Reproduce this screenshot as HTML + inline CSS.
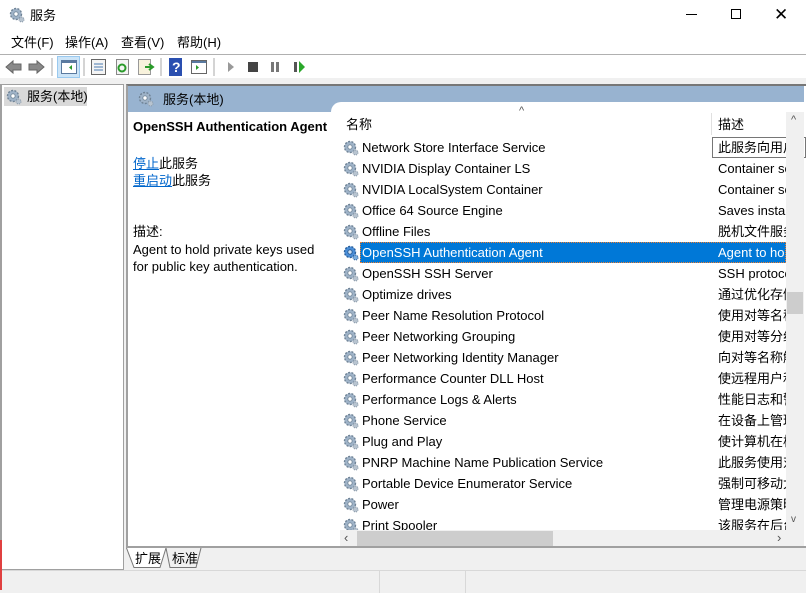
<!DOCTYPE html>
<html><head><meta charset="utf-8"><style>
*{margin:0;padding:0;box-sizing:border-box}
body{width:806px;height:593px;overflow:hidden;background:#fff;font-family:"Liberation Sans","Noto Sans CJK SC",sans-serif;font-size:13px;line-height:15px;color:#000;position:relative}
.a{position:absolute;white-space:nowrap}
.g{position:absolute;width:16px;height:16px}
</style></head><body>
<svg width="0" height="0" style="position:absolute"><defs>
<g id="gear"><circle cx="7" cy="7" r="5.5" fill="#9fb3c8" stroke="#6f8396" stroke-width="1.4" stroke-dasharray="2 1.4"/><circle cx="7" cy="7" r="2.2" fill="#fff" stroke="#7a8ea0"/><circle cx="12.5" cy="12.5" r="2.5" fill="#b8c4d0" stroke="#8898a8" stroke-dasharray="1.2 1"/></g>
<g id="gearS"><circle cx="7" cy="7" r="5.5" fill="#4a8ed8" stroke="#2a5f9a" stroke-width="1.4" stroke-dasharray="2 1.4"/><circle cx="7" cy="7" r="2.2" fill="#cfe2f5" stroke="#2a5f9a"/><circle cx="12.5" cy="12.5" r="2.5" fill="#7aaee0" stroke="#2a5f9a" stroke-dasharray="1.2 1"/></g>
</defs></svg>
<!-- title -->
<svg class="g" style="left:9px;top:7px"><use href="#gear"/></svg>
<div class="a" style="left:30px;top:8px">服务</div>
<div class="a" style="left:686px;top:14px;width:11px;height:1px;background:#000"></div>
<div class="a" style="left:731px;top:9px;width:10px;height:10px;border:1px solid #000"></div>
<div class="a" style="left:774px;top:6px;font-size:17px;line-height:17px">✕</div>
<!-- menu -->
<div class="a" style="left:11px;top:35px">文件(F)</div>
<div class="a" style="left:65px;top:35px">操作(A)</div>
<div class="a" style="left:121px;top:35px">查看(V)</div>
<div class="a" style="left:177px;top:35px">帮助(H)</div>
<div class="a" style="left:0;top:54px;width:806px;height:1px;background:#b0b0b0"></div>
<!-- toolbar -->
<svg class="a" style="left:0;top:55px" width="320" height="24">
<path d="M6 12 L13 6 V9 H21 V15 H13 V18 Z" fill="#8a8a8a" stroke="#666"/>
<path d="M44 12 L37 6 V9 H29 V15 H37 V18 Z" fill="#8a8a8a" stroke="#666"/>
<line x1="52" y1="3" x2="52" y2="21" stroke="#aaa"/>
<rect x="57.5" y="1.5" width="22" height="21" fill="#cce4f7" stroke="#99c9ef"/>
<rect x="61.5" y="5.5" width="15" height="13" fill="#fff" stroke="#5a7aa0"/><rect x="62" y="6" width="14" height="2" fill="#5a7aa0"/><path d="M72 10 L69 12.5 L72 15Z" fill="#2a9a2a"/>
<line x1="84" y1="3" x2="84" y2="21" stroke="#aaa"/>
<rect x="91.5" y="4.5" width="14" height="15" fill="#f4f4f4" stroke="#666"/><path d="M94 9H103M94 12H103M94 15H103" stroke="#4a7ab0"/>
<rect x="116.5" y="4.5" width="12" height="15" fill="#f4f4f4" stroke="#888"/><circle cx="122" cy="13" r="3.5" fill="none" stroke="#2a9a2a" stroke-width="2"/>
<rect x="138.5" y="4.5" width="12" height="15" fill="#f8f2dc" stroke="#999"/><path d="M145 12H152M149 9L153 12L149 15" stroke="#2a9a2a" stroke-width="2" fill="none"/>
<line x1="161" y1="3" x2="161" y2="21" stroke="#aaa"/>
<rect x="169" y="3" width="13" height="18" fill="#2a4fb0"/><text x="172" y="17" fill="#fff" font-size="14" font-weight="bold" font-family="Liberation Sans">?</text>
<rect x="191.5" y="5.5" width="15" height="13" fill="#fff" stroke="#666"/><rect x="192" y="6" width="14" height="2" fill="#5a7aa0"/><path d="M196 10 L199 12.5 L196 15Z" fill="#2a9a2a"/>
<line x1="214" y1="3" x2="214" y2="21" stroke="#aaa"/>
<path d="M228 7 L234 12 L228 17Z" fill="#999"/>
<rect x="248" y="7" width="10" height="10" fill="#444"/>
<rect x="271" y="7" width="3" height="10" fill="#777"/><rect x="276" y="7" width="3" height="10" fill="#777"/>
<rect x="294" y="7" width="3" height="10" fill="#555"/><path d="M299 6 L305 12 L299 18Z" fill="#2aa82a"/>
</svg>
<div class="a" style="left:0;top:78px;width:806px;height:6px;background:#f0f0f0"></div>
<!-- left pane -->
<div class="a" style="left:0;top:84px;width:124px;height:486px;border:1px solid #a0a0a0;border-left-width:2px"></div>
<div class="a" style="left:4px;top:87px;width:83px;height:19px;background:#d9d9d9"></div>
<svg class="g" style="left:6px;top:89px"><use href="#gear"/></svg>
<div class="a" style="left:27px;top:89px">服务(本地)</div>
<!-- right panel -->
<div class="a" style="left:124px;top:84px;width:682px;height:486px;background:#f0f0f0"></div>
<div class="a" style="left:126px;top:84px;width:680px;height:464px;border-top:2px solid #777;border-left:2px solid #a0a0a0;background:#fff"></div>
<div class="a" style="left:128px;top:86px;width:676px;height:26px;background:#98b3d0"></div>
<div class="a" style="left:331px;top:102px;width:473px;height:12px;background:#fff;border-top-left-radius:10px"></div>
<svg class="g" style="left:138px;top:91px"><use href="#gear"/></svg>
<div class="a" style="left:163px;top:92px">服务(本地)</div>
<div class="a" style="left:133px;top:119px;font-weight:bold">OpenSSH Authentication Agent</div>
<div class="a" style="left:133px;top:156px"><span style="color:#0066cc;text-decoration:underline">停止</span>此服务</div>
<div class="a" style="left:133px;top:173px"><span style="color:#0066cc;text-decoration:underline">重启动</span>此服务</div>
<div class="a" style="left:133px;top:224px">描述:</div>
<div class="a" style="left:133px;top:241px;line-height:17px">Agent to hold private keys used<br>for public key authentication.</div>
<!-- list header -->
<div class="a" style="left:346px;top:117px">名称</div>
<div class="a" style="left:519px;top:104px;font-size:11px;color:#555">^</div>
<div class="a" style="left:711px;top:113px;width:1px;height:22px;background:#e0e0e0"></div>
<div class="a" style="left:718px;top:117px">描述</div>
<div class="a" style="left:360px;top:242px;width:426px;height:21px;background:#0078d7;outline:1px dotted #f08030;outline-offset:-1px"></div>
<div class="a" style="left:712px;top:137px;width:94px;height:21px;border:1px solid #767676;background:#fff;z-index:1"></div>
<script>
var n=["Network Store Interface Service","NVIDIA Display Container LS","NVIDIA LocalSystem Container","Office 64 Source Engine","Offline Files","OpenSSH Authentication Agent","OpenSSH SSH Server","Optimize drives","Peer Name Resolution Protocol","Peer Networking Grouping","Peer Networking Identity Manager","Performance Counter DLL Host","Performance Logs & Alerts","Phone Service","Plug and Play","PNRP Machine Name Publication Service","Portable Device Enumerator Service","Power","Print Spooler"];
var d=["此服务向用户模式","Container se","Container se","Saves instal","脱机文件服务","Agent to ho","SSH protoco","通过优化存储","使用对等名称","使用对等分组","向对等名称解","使远程用户和","性能日志和警","在设备上管理","使计算机在极","此服务使用对","强制可移动大","管理电源策略","该服务在后台"];
var h="";
for(var i=0;i<n.length;i++){var y=137+21*i;var s=i==5;
h+='<svg class="g" style="left:343px;top:'+(y+3)+'px;z-index:2"><use href="#'+(s?'gearS':'gear')+'"/></svg>';
h+='<div class="a" style="left:362px;top:'+(y+3)+'px;z-index:2;'+(s?'color:#fff':'')+'">'+n[i].replace("&","&amp;")+'</div>';
h+='<div class="a" style="left:718px;top:'+(y+3)+'px;width:68px;overflow:hidden;z-index:3;'+(s?'color:#fff':'')+'">'+d[i]+'</div>';}
document.write(h);
</script>
<!-- v scrollbar -->
<div class="a" style="left:786px;top:112px;width:18px;height:418px;background:#f0f0f0;z-index:4"></div>
<div class="a" style="left:791px;top:113px;font-size:11px;color:#555;z-index:5">^</div>
<div class="a" style="left:787px;top:292px;width:16px;height:22px;background:#cdcdcd;z-index:5"></div>
<div class="a" style="left:791px;top:512px;font-size:10px;color:#555;z-index:5">v</div>
<!-- h scrollbar -->
<div class="a" style="left:340px;top:530px;width:464px;height:16px;background:#f0f0f0;z-index:4"></div>
<div class="a" style="left:357px;top:531px;width:196px;height:15px;background:#cdcdcd;z-index:5"></div>
<div class="a" style="left:344px;top:530px;font-size:13px;color:#555;z-index:5">‹</div>
<div class="a" style="left:777px;top:530px;font-size:13px;color:#555;z-index:5">›</div>
<div class="a" style="left:126px;top:546px;width:680px;height:2px;background:#a0a0a0;z-index:5"></div>
<!-- tabs -->
<svg class="a" style="left:126px;top:548px" width="120" height="22"><path d="M0.5 0 L8 19.5 H34 L40 0" fill="#fff" stroke="#777"/><path d="M40 0 L44 19.5 H70 L75 0" fill="#f0f0f0" stroke="#777"/></svg>
<div class="a" style="left:135px;top:551px">扩展</div>
<div class="a" style="left:172px;top:551px">标准</div>
<!-- status -->
<div class="a" style="left:0;top:570px;width:806px;height:23px;background:#f0f0f0;border-top:1px solid #d8d8d8"></div>
<div class="a" style="left:379px;top:571px;width:1px;height:22px;background:#d8d8d8"></div>
<div class="a" style="left:465px;top:571px;width:1px;height:22px;background:#d8d8d8"></div>
<div class="a" style="left:0;top:540px;width:2px;height:50px;background:#e04040"></div>
</body></html>
